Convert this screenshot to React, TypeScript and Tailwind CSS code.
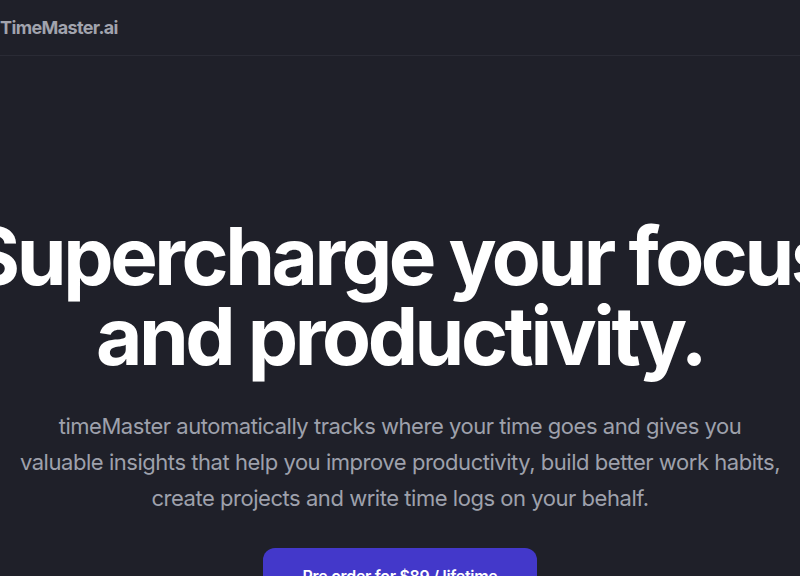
export default function App() {
  return (
    <div
      className="flex min-h-screen w-full flex-col overflow-hidden bg-[#1f2029] text-white"
      style={{ fontFamily: "Inter, 'Noto Sans', sans-serif" }}
    >
      <header className="flex h-[56px] items-center border-b border-[#2a2b35]">
        <span className="text-[18px] font-bold tracking-[-0.035em] text-[#a1a3ad]">TimeMaster.ai</span>
      </header>

      <main className="flex flex-col items-center pt-40 text-center">
        <h1 className="flex flex-col items-center text-[80px] font-bold leading-none tracking-[-0.043em] text-white">
          <span className="whitespace-nowrap">Supercharge your focus</span>
          <span className="whitespace-nowrap">and productivity.</span>
        </h1>

        <p className="mt-8 whitespace-nowrap text-[22px] leading-9 tracking-[-0.021em] text-[#9ea1ac]">
          timeMaster automatically tracks where your time goes and gives you
          <br />
          valuable insights that help you improve productivity, build better work habits,
          <br />
          create projects and write time logs on your behalf.
        </p>

        <button className="mt-8 rounded-xl bg-[#4338ca] px-10 py-4 text-[16px] font-semibold tracking-[-0.02em] text-white">
          Pre order for $89 / lifetime
        </button>
      </main>
    </div>
  );
}
